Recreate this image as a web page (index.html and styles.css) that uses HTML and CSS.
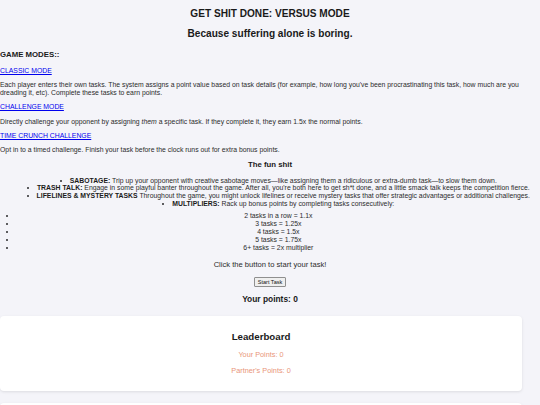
FILE: index.html
```html
<!DOCTYPE html>
<html>
<head>
<meta charset="utf-8">
<link rel="stylesheet" href="styles.css">
</head>
<body>
<h2 class="title">GET SHIT DONE: VERSUS MODE</h2>
<h2 class="title">Because suffering alone is boring.</h2>
<h3 class="section modes">GAME MODES::</h3>
<p><a href="#" class="mode">CLASSIC MODE</a></p>
<p>Each player enters their own tasks. The system assigns a point value based on task details (for example, how long you've been procrastinating this task, how much are you dreading it, etc). Complete these tasks to earn points.</p>
<p><a href="#" class="mode">CHALLENGE MODE</a></p>
<p>Directly challenge your opponent by assigning <em>them</em> a specific task. If they complete it, they earn 1.5x the normal points.</p>
<p><a href="#" class="mode">TIME CRUNCH CHALLENGE</a></p>
<p class="last">Opt in to a timed challenge. Finish your task before the clock runs out for extra bonus points.</p>
<h3 class="section fun-title center">The fun shit</h3>
<ul class="fun">
<li><b>SABOTAGE:</b> Trip up your opponent with creative sabotage moves—like assigning them a ridiculous or extra-dumb task—to slow them down.</li>
<li><b>TRASH TALK:</b> Engage in some playful banter throughout the game. After all, you're both here to get sh*t done, and a little smack talk keeps the competition fierce.</li>
<li><b>LIFELINES &amp; MYSTERY TASKS</b> Throughout the game, you might unlock lifelines or receive mystery tasks that offer strategic advantages or additional challenges.</li>
<li><b>MULTIPLIERS:</b> Rack up bonus points by completing tasks consecutively:</li>
</ul>
<ul class="multi">
<li>2 tasks in a row = 1.1x</li>
<li>3 tasks = 1.25x</li>
<li>4 tasks = 1.5x</li>
<li>5 tasks = 1.75x</li>
<li>6+ tasks = 2x multiplier</li>
</ul>
<p class="prompt">Click the button to start your task!</p>
<div class="center"><button class="start">Start Task</button></div>
<h3 class="points">Your points: 0</h3>
<div class="card">
<h2 class="card-title">Leaderboard</h2>
<p class="score">Your Points: 0</p>
<p class="score">Partner's Points: 0</p>
</div>
<div class="card card-next"></div>
</body>
</html>
```
FILE: styles.css
```css
html {
  background: #f4f4f9;
}
body {
  margin: 0;
  font-family: "Liberation Sans", Arial, sans-serif;
  font-size: 6.85px;
  line-height: 7.67px;
  color: #2b2b2b;
  background: #f4f4f9;
}
p {
  margin: 6.67px 0;
}
p.last {
  margin-bottom: 0;
}
.title {
  font-size: 10.1px;
  line-height: 11.6px;
  margin: 8.3px 0;
  text-align: center;
  color: #1a1a1a;
}
.section {
  font-size: 7.8px;
  line-height: 9px;
  margin: 8.4px 0;
  color: #1a1a1a;
}
.modes {
  margin-top: 9.8px;
}
.fun-title {
  margin: 6.2px 0 7.4px;
}
.center {
  text-align: center;
}
.mode {
  color: #0000ee;
}
.fun {
  margin: 6.67px 0 4.6px;
  padding-left: 16.7px;
  text-align: center;
  list-style-position: inside;
}
.fun b {
  color: #1a1a1a;
}
.multi {
  margin: 4.6px 0 6.67px;
  padding-left: 16.7px;
  text-align: center;
}
.multi li {
  line-height: 8px;
}
.prompt {
  font-size: 7.6px;
  line-height: 8.7px;
  text-align: center;
  margin: 8.8px 0 7.6px;
}
.start {
  font-family: "Liberation Sans", Arial, sans-serif;
  font-size: 5.56px;
  line-height: 6.4px;
  padding: 0.6px 2.5px;
  border: 0.8px solid #8f8f8f;
  border-radius: 1px;
  background: #efefef;
  color: #111;
}
.points {
  font-size: 8.4px;
  line-height: 9.6px;
  text-align: center;
  margin: 8.4px 0;
  color: #1a1a1a;
}
.card {
  width: 522px;
  box-sizing: border-box;
  margin: 12px 0;
  padding: 7px;
  background: #fff;
  border-radius: 4px;
  box-shadow: 0 1px 3px rgba(0, 0, 0, 0.1);
  text-align: center;
}
.card-next {
  height: 60px;
}
.card-title {
  font-size: 9.7px;
  line-height: 11.2px;
  margin: 8px 0;
  color: #1a1a1a;
}
.score {
  font-size: 7.3px;
  line-height: 8.4px;
  color: #e9967a;
  margin: 8.2px 0;
}
```
